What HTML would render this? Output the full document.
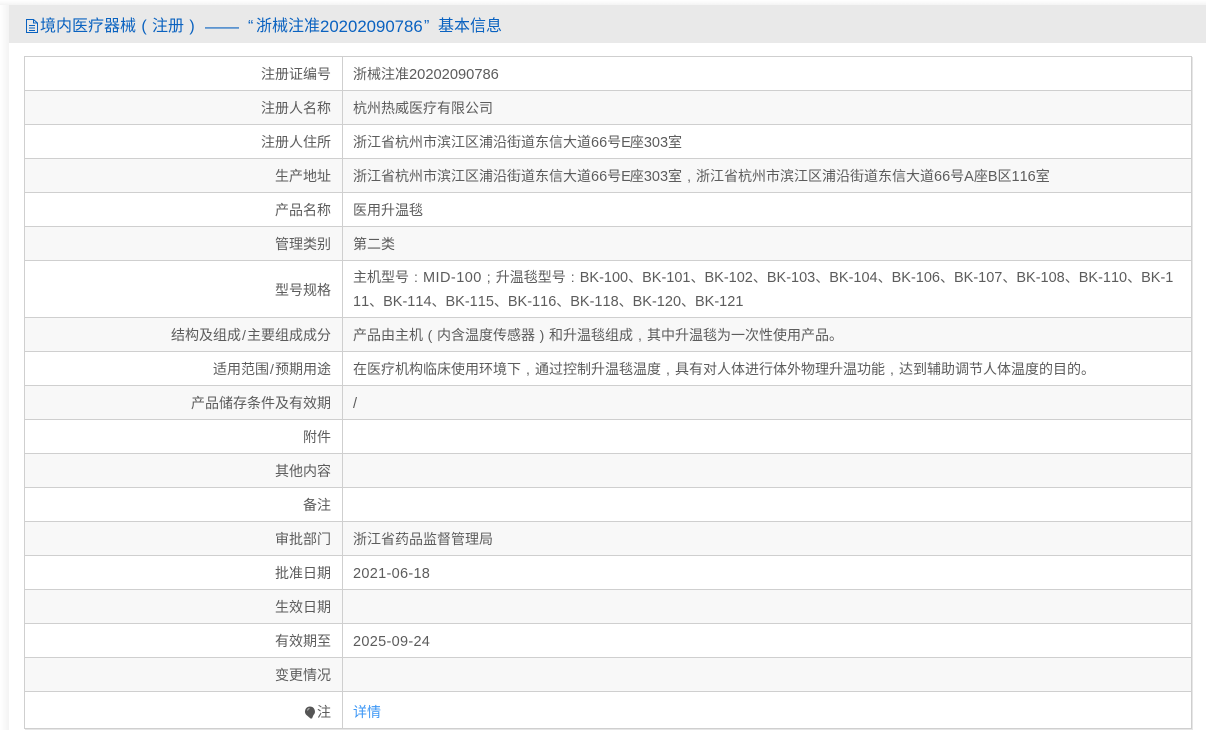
<!DOCTYPE html>
<html lang="zh"><head><meta charset="utf-8"><style>
html,body{margin:0;padding:0;background:#fff}
body{width:1206px;height:730px;overflow:hidden;position:relative;font-family:"Liberation Sans","Noto Sans CJK SC",sans-serif;color:#5c5c5c;font-size:14px;font-kerning:none}
#shade{position:absolute;left:0;top:0;width:9px;height:730px;background:linear-gradient(to right,#fff,#f3f3f3)}
#top{position:absolute;left:0;top:0;width:1206px;height:5px;background:linear-gradient(to bottom,#fff,#f4f4f4)}
#head{position:absolute;left:9px;top:5px;width:1197px;height:38px;background:#e9e9e9;color:#0a62c0;font-size:16px;line-height:38px;white-space:nowrap}
#head svg{position:absolute;left:17px;top:14px}
#head span{position:absolute;top:3px}
table{position:absolute;left:24px;top:56px;width:1168px;border-collapse:collapse;table-layout:fixed;box-shadow:1px 1px 0 #e6e6e6}
td{border:1px solid #cfcfcf;padding:2px 0 0;line-height:23px;vertical-align:middle}
td:first-child{width:306px;text-align:right;padding-right:11px}
td:last-child{padding-left:10px}
tr{height:34px}
tr:nth-child(even){background:#f8f8f8}
a{color:#3d97f5;text-decoration:none}
i{font-style:normal;font-size:14.5px}
i.d{letter-spacing:.3px}
i.m{letter-spacing:.45px}
i.e{letter-spacing:-1px}
i.n{font-size:14.7px}
u{text-decoration:none;display:inline-block;width:14px;text-align:center}
u.s{width:6px}
</style></head><body>
<div id="shade"></div><div id="top"></div>
<div id="head"><svg width="12" height="14" viewBox="0 0 12 14" fill="none" stroke="#0a62c0" stroke-width="1"><path d="M.5 .5H7.500L11.500 4V13.500H.5ZM7.500 .5V4H11.500M3 6.500H9M3 9H9M3 11.500H9"/></svg><span style="left:31px">境内医疗器械</span><span style="left:127px;width:16px;text-align:center">(</span><span style="left:143px">注册</span><span style="left:175px;width:16px;text-align:center">)</span><span style="left:196px;font-size:17px">——</span><span style="left:239px">“</span><span style="left:247px">浙械注准</span><span style="left:311px;font-size:16.8px">20202090786</span><span style="left:415px">”</span><span style="left:429px">基本信息</span></div>
<table>
<tr><td>注册证编号</td><td>浙械注准<i class="n">20202090786</i></td></tr>
<tr><td>注册人名称</td><td>杭州热威医疗有限公司</td></tr>
<tr><td>注册人住所</td><td>浙江省杭州市滨江区浦沿街道东信大道<i>66</i>号<i class="e">E</i>座<i>303</i>室</td></tr>
<tr><td>生产地址</td><td>浙江省杭州市滨江区浦沿街道东信大道<i>66</i>号<i class="e">E</i>座<i>303</i>室<u>,</u>浙江省杭州市滨江区浦沿街道东信大道<i>66</i>号<i>A</i>座<i>B</i>区<i>116</i>室</td></tr>
<tr><td>产品名称</td><td>医用升温毯</td></tr>
<tr><td>管理类别</td><td>第二类</td></tr>
<tr style="height:57px"><td>型号规格</td><td style="white-space:nowrap">主机型号<u>:</u><i class="m">MID-100</i><u>;</u>升温毯型号<u>:</u><i>BK-100</i>、<i>BK-101</i>、<i>BK-102</i>、<i>BK-103</i>、<i>BK-104</i>、<i>BK-106</i>、<i>BK-107</i>、<i>BK-108</i>、<i>BK-110</i>、<i>BK-1</i><br><i>11</i>、<i>BK-114</i>、<i>BK-115</i>、<i>BK-116</i>、<i>BK-118</i>、<i>BK-120</i>、<i>BK-121</i></td></tr>
<tr><td>结构及组成<u class="s">/</u>主要组成成分</td><td>产品由主机<u>(</u>内含温度传感器<u>)</u>和升温毯组成<u>,</u>其中升温毯为一次性使用产品。</td></tr>
<tr><td>适用范围<u class="s">/</u>预期用途</td><td>在医疗机构临床使用环境下<u>,</u>通过控制升温毯温度<u>,</u>具有对人体进行体外物理升温功能<u>,</u>达到辅助调节人体温度的目的。</td></tr>
<tr><td>产品储存条件及有效期</td><td><i>/</i></td></tr>
<tr><td>附件</td><td></td></tr>
<tr><td>其他内容</td><td></td></tr>
<tr><td>备注</td><td></td></tr>
<tr><td>审批部门</td><td>浙江省药品监督管理局</td></tr>
<tr><td>批准日期</td><td><i class="d">2021-06-18</i></td></tr>
<tr><td>生效日期</td><td></td></tr>
<tr><td>有效期至</td><td><i class="d">2025-09-24</i></td></tr>
<tr><td>变更情况</td><td></td></tr>
<tr style="height:37px"><td style="padding-top:4px"><svg width="12" height="13" viewBox="0 0 12 13" style="vertical-align:-2px;margin-right:1px"><path d="M6 0.500a5 5 0 0 1 3.500 8.500L8 12.500H6.500L3 9.500A5 5 0 0 1 6 0.500Z" fill="#555"/><path d="M3.500 4.500a2.500 2.500 0 0 1 2-2" stroke="#bbb" fill="none"/></svg>注</td><td style="padding-top:4px"><a>详情</a></td></tr>
</table>
</body></html>
